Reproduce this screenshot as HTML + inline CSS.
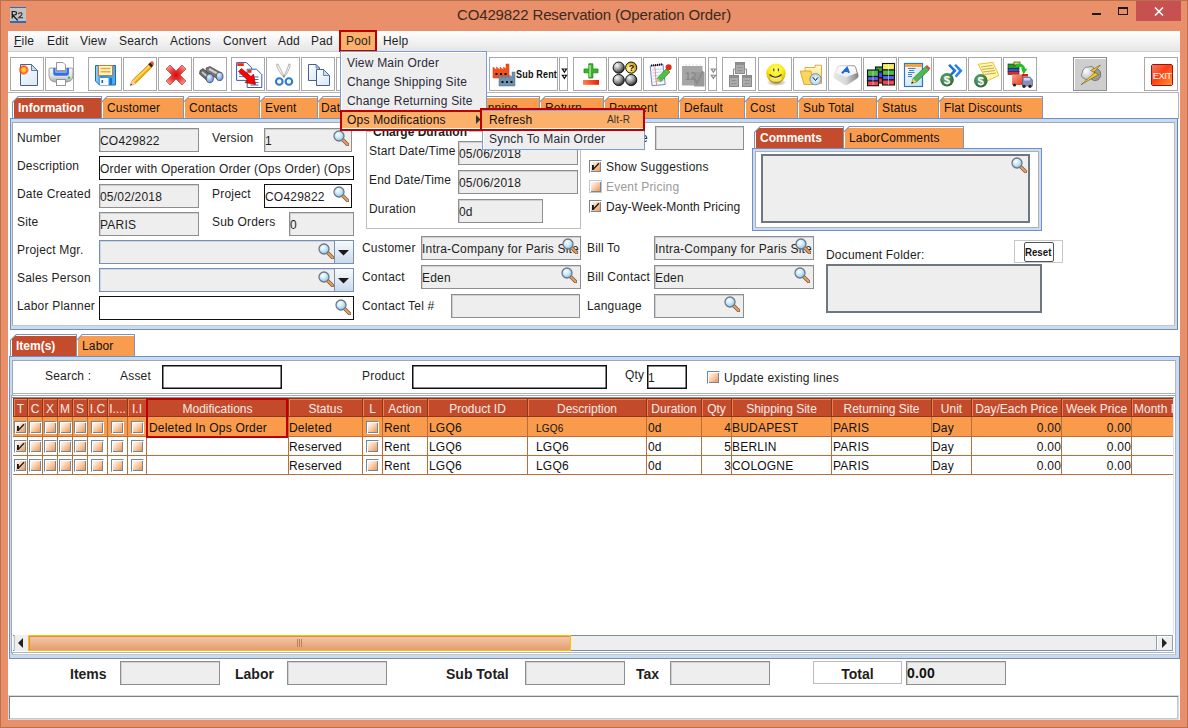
<!DOCTYPE html>
<html><head><meta charset="utf-8">
<style>
*{box-sizing:border-box;margin:0;padding:0}
html,body{width:1188px;height:728px;overflow:hidden;background:#E98F69;font-family:"Liberation Sans",sans-serif;font-size:12px;color:#222}
.a{position:absolute}
svg.a{overflow:visible}
.t{position:absolute;white-space:nowrap;line-height:14px;font-size:12px;color:#1E1E1E;letter-spacing:0.2px}
.b{font-weight:bold;letter-spacing:0}
.fld{position:absolute;background:#EEEEEE;border:1px solid #8E8E8E;box-shadow:inset 1px 1px 0 #D0D0D0;overflow:hidden;white-space:nowrap;line-height:14px;padding:5px 0 0 0;color:#1E1E1E;letter-spacing:0.2px}
.wfld{position:absolute;background:#fff;border:1px solid #111;overflow:hidden;white-space:nowrap;line-height:14px;padding:5px 0 0 0;color:#1E1E1E;letter-spacing:0.2px}
.tb{position:absolute;top:57px;height:34px;width:34px;border:1px solid #A9A9A9;background:#fff}
.tb svg{position:absolute;left:0;top:0}
.tab{position:absolute;height:22px;background:#8094B4;clip-path:polygon(6px 0,100% 0,100% 100%,0 100%,0 6px)}
.tab i{position:absolute;left:1px;top:1px;right:1px;bottom:0;background:#FA9C4E;box-shadow:inset 1px 1px 0 #fff;clip-path:polygon(5.5px 0,100% 0,100% 100%,0 100%,0 5.5px)}
.tab span{position:absolute;left:6px;top:5px;line-height:14px;white-space:nowrap;color:#111;letter-spacing:0.15px}
.tabA i{background:#C44C2D}
.tabA span{color:#fff;font-weight:bold;letter-spacing:0}
.hd{position:absolute;top:398px;height:19px;background:#C44A2C;border:1px solid #8C3A1E;border-left:none;box-shadow:inset 1px 1px 0 #F47B4A;color:#F6EDE6;text-align:center;line-height:21px;white-space:nowrap;overflow:hidden}
.cb{position:absolute;width:13px;height:13px;border-top:1px solid #72879A;border-left:1px solid #72879A;border-right:1px solid #fff;border-bottom:1px solid #fff;box-shadow:inset 1px 1px 0 #fff,inset -1px -1px 0 #72879A;background:linear-gradient(135deg,#fff 0%,#FCE0C8 35%,#F6B27E 70%,#EE8A40 100%)}
</style>
<svg width="0" height="0" style="position:absolute">
<defs>
<radialGradient id="lens" cx="0.4" cy="0.35" r="0.7"><stop offset="0" stop-color="#FFFFFF"/><stop offset="0.5" stop-color="#C6E8F8"/><stop offset="1" stop-color="#7FB8D8"/></radialGradient>
<symbol id="mag" viewBox="0 0 16 16"><path d="M9.5 9.5L14.5 14.5" stroke="#6A5A6A" stroke-width="3.6" stroke-linecap="round"/><path d="M9.5 9.5L14.5 14.5" stroke="#F4A040" stroke-width="2" stroke-linecap="round"/><circle cx="6" cy="6" r="5" fill="url(#lens)" stroke="#707888" stroke-width="1.3"/></symbol>
</defs></svg>
</head>
<body>
<div class="a" style="left:0;top:0;width:1188px;height:728px;border:1px solid #B9724F;background:#E98F69"></div>
<div class="a" style="left:10px;top:7px;width:16px;height:16px;background:#C2C2C2;border-top:1.5px solid #2A6DC0;border-bottom:2px solid #2A6DC0"></div>
<svg class="a" style="left:10px;top:7px" width="16" height="16" viewBox="0 0 16 16"><path d="M2.2 4.5V11.5M1.5 4.5H4.5Q6.5 4.5 6.5 6.3Q6.5 8 4.5 8H2.5L7.8 13.5" stroke="#1A1A1A" stroke-width="1.2" fill="none"/><path d="M8.3 6.8Q9.5 5.5 11 5.8Q12.5 6.3 11.8 7.8L8.8 10.8H13" stroke="#2A2A2A" stroke-width="1.1" fill="none"/></svg>
<div class="t" style="left:457px;top:6px;font-size:15px;line-height:18px;color:#3A2A20;letter-spacing:-0.14px" id="title">CO429822 Reservation (Operation Order)</div>
<div class="a" style="left:1092px;top:13px;width:9px;height:2px;background:#1A1A1A"></div>
<div class="a" style="left:1118px;top:7px;width:10px;height:8px;border:1px solid #1A1A1A;border-top-width:2px"></div>
<div class="a" style="left:1136px;top:1px;width:45px;height:20px;background:#C75050"></div>
<svg class="a" style="left:1154px;top:7px" width="10" height="9" viewBox="0 0 10 9"><path d="M1 0.5L9 8.5M9 0.5L1 8.5" stroke="#fff" stroke-width="1.6"/></svg>
<div class="a" style="left:8px;top:31px;width:1172px;height:689px;background:#fff"></div>
<div class="a" style="left:8px;top:31px;width:1172px;height:21px;background:linear-gradient(#FFFFFF,#E6E6E6);border-bottom:1px solid #CFCFCF"></div>
<div class="t" style="left:14px;top:34px"><u>F</u>ile</div>
<div class="t" style="left:47px;top:34px">Edit</div>
<div class="t" style="left:80px;top:34px">View</div>
<div class="t" style="left:119px;top:34px">Search</div>
<div class="t" style="left:170px;top:34px">Actions</div>
<div class="t" style="left:223px;top:34px">Convert</div>
<div class="t" style="left:278px;top:34px">Add</div>
<div class="t" style="left:311px;top:34px">Pad</div>
<div class="a" style="left:339px;top:30px;width:38px;height:22px;background:#FBB06C;border:2px solid #C00000"></div>
<div class="t" style="left:346px;top:34px">Pool</div>
<div class="t" style="left:383px;top:34px">Help</div>
<div class="a" style="left:8px;top:92px;width:1170px;height:1px;background:#B4B4B4"></div>
<!-- 1 new -->
<div class="tb" style="left:10px"><svg width="34" height="34" viewBox="0 0 34 34">
<defs><linearGradient id="pg" x1="0" y1="0" x2="0.6" y2="1"><stop offset="0" stop-color="#fff"/><stop offset="1" stop-color="#DCEBF8"/></linearGradient>
<radialGradient id="star" cx="0.5" cy="0.5" r="0.5"><stop offset="0" stop-color="#FFE020"/><stop offset="0.45" stop-color="#FFB020"/><stop offset="0.6" stop-color="#F04A20"/><stop offset="1" stop-color="#F86040" stop-opacity="0"/></radialGradient></defs>
<path d="M9.5 6.5H20.5L26.5 12.5V27.5H9.5Z" fill="url(#pg)" stroke="#48608E" stroke-width="1"/>
<path d="M20.5 6.5L26.5 12.5H20.5Z" fill="#BFE0F4" stroke="#48608E" stroke-width="0.8"/>
<circle cx="12.7" cy="11.9" r="5.6" fill="url(#star)"/>
</svg></div>
<!-- 2 print -->
<div class="tb" style="left:45px;width:29px"><svg width="29" height="34" viewBox="0 0 29 34">
<defs><linearGradient id="prb" x1="0" y1="0" x2="0" y2="1"><stop offset="0" stop-color="#F8F8F8"/><stop offset="0.6" stop-color="#E0E0E0"/><stop offset="1" stop-color="#A8A8A8"/></linearGradient></defs>
<path d="M3 11Q3 10 4 10H26Q27 10 27 11V17Q27 24 20 24H10Q3 24 3 17Z" fill="url(#prb)" stroke="#8A8A8A" stroke-width="0.8"/>
<path d="M7.3 10H22.9V15.5Q22.9 17.8 20.5 17.8H9.7Q7.3 17.8 7.3 15.5Z" fill="#2E6EE8"/>
<path d="M9 10H21V14Q21 15 20 15H10Q9 15 9 14Z" fill="#7AAAF4"/>
<path d="M10.5 4.5H17L19.5 7V12.5H10.5Z" fill="#fff" stroke="#8A8A8A" stroke-width="0.9"/>
<rect x="10" y="12" width="10" height="2" fill="#9A9AA8"/>
<rect x="10.5" y="21.5" width="9" height="6" fill="#fff" stroke="#8A8A8A" stroke-width="0.9"/>
<circle cx="23" cy="19.7" r="1.1" fill="#28B028"/>
</svg></div>
<!-- 3 save -->
<div class="tb" style="left:88px"><svg width="34" height="34" viewBox="0 0 34 34">
<defs><linearGradient id="flp" x1="0" y1="0" x2="1" y2="0"><stop offset="0" stop-color="#A8D8F8"/><stop offset="0.3" stop-color="#2A8AE0"/><stop offset="1" stop-color="#50B0F0"/></linearGradient></defs>
<path d="M6.5 7.5H26.5V27H10.5L6.5 23Z" fill="url(#flp)" stroke="#1A6AC0" stroke-width="1"/>
<rect x="9.5" y="7.5" width="14" height="10" fill="#FFF6D0" stroke="#C88030" stroke-width="1"/>
<path d="M11.5 10.5H21.5M11.5 13.8H21.5" stroke="#F8A830" stroke-width="1.5"/>
<rect x="11" y="20" width="8.5" height="7" fill="#F8FBFE"/><rect x="12.5" y="22" width="1.6" height="3" fill="#1A5FC8"/>
<rect x="20.5" y="20" width="2.5" height="7" fill="#1E70D0"/>
</svg></div>
<!-- 4 pencil -->
<div class="tb" style="left:123px"><svg width="34" height="34" viewBox="0 0 34 34">
<defs><linearGradient id="shd" x1="0" y1="0" x2="1" y2="1"><stop offset="0" stop-color="#fff" stop-opacity="0"/><stop offset="1" stop-color="#888" stop-opacity="0.45"/></linearGradient></defs>
<path d="M7 26L14 12L18 16Z" fill="url(#shd)"/>
<path d="M6.2 27.6L8.2 22.4L24.6 6.6L27.6 9.6L11.4 25.6Z" fill="#F8A800" stroke="#C07800" stroke-width="0.6"/>
<path d="M8.4 23.2L25 7.2L26.2 8.4L9.8 24.6Z" fill="#FFD860"/>
<path d="M6.2 27.6L8.2 22.4L11.4 25.6Z" fill="#F6D2B8"/>
<path d="M6.2 27.6L7 25.6L8.2 26.8Z" fill="#333"/>
<path d="M24.2 6.2L26.4 4.2L29.4 7.2L27.6 9.6Z" fill="#222"/>
<path d="M26 4.6L27.6 3.2Q29 3 29.6 4.4L30 6.2L28.8 7.6Z" fill="#F05028"/>
</svg></div>
<!-- 5 X -->
<div class="tb" style="left:158px"><svg width="34" height="34" viewBox="0 0 34 34">
<defs><radialGradient id="xg" cx="0.5" cy="0.5" r="0.6"><stop offset="0" stop-color="#D80808"/><stop offset="0.5" stop-color="#E84040"/><stop offset="1" stop-color="#F8A0A0"/></radialGradient></defs>
<path d="M7 11L11 7L17 13L23 7L27 11L21 17L27 23L23 27L17 21L11 27L7 23L13 17Z" fill="url(#xg)" stroke="#C03030" stroke-width="0.7" stroke-linejoin="round"/>
</svg></div>
<!-- 6 binoculars -->
<div class="tb" style="left:193px"><svg width="34" height="34" viewBox="0 0 34 34">
<defs><linearGradient id="bar" x1="0" y1="0" x2="0" y2="1"><stop offset="0" stop-color="#505050"/><stop offset="0.5" stop-color="#B8B8B8"/><stop offset="1" stop-color="#404040"/></linearGradient>
<radialGradient id="bl" cx="0.4" cy="0.35" r="0.6"><stop offset="0" stop-color="#E8F4FF"/><stop offset="1" stop-color="#6A9AE0"/></radialGradient></defs>
<path d="M6 12.5L9 10.5L18 18L14 23.5L5.5 16Z" fill="#6A6A6A" stroke="#333" stroke-width="0.6"/>
<path d="M8 14L15.5 20.5" stroke="#C8C8C8" stroke-width="2"/>
<path d="M12 10L16 8.5L27.5 15L23.5 21L12.5 14Z" fill="#777" stroke="#333" stroke-width="0.6"/>
<path d="M15 11L25 16.5" stroke="#D0D0D0" stroke-width="2"/>
<ellipse cx="15.8" cy="20.3" rx="3.6" ry="4.4" fill="url(#bl)" stroke="#444" stroke-width="0.8"/>
<ellipse cx="25.6" cy="18.4" rx="3.4" ry="4.2" fill="url(#bl)" stroke="#444" stroke-width="0.8"/>
</svg></div>
<!-- 7 copy-to -->
<div class="tb" style="left:231px"><svg width="34" height="34" viewBox="0 0 34 34">
<path d="M4.6 4.6H14.5L19.7 9.8V22.4H4.6Z" fill="#fff" stroke="#3A5AA8" stroke-width="1"/>
<rect x="5.3" y="5.2" width="6.5" height="2.8" fill="#F82808"/>
<path d="M7 16H15M7 18.5H15" stroke="#3A5AA8" stroke-width="0.8"/>
<path d="M15.2 11.2H24.5L29.8 16.5V29.5H15.2Z" fill="#fff" stroke="#3A5AA8" stroke-width="1"/>
<rect x="16" y="12" width="3.5" height="2.8" fill="#F82808"/>
<path d="M18.5 19H26.5M18.5 21.5H26.5M18.5 24.5H26.5M18.5 27H26.5" stroke="#3A5AA8" stroke-width="0.9"/>
<path d="M6.5 13.5L9.5 10.5L19 18.5L21.5 16L23.5 26.5L13 24.5L15.5 22Z" fill="#FF0000" stroke="#700" stroke-width="0.6"/>
</svg></div>
<!-- 8 scissors -->
<div class="tb" style="left:266px"><svg width="34" height="34" viewBox="0 0 34 34">
<path d="M9.7 6.1Q9 9 15 17.5L17.5 19Q13 10 11 6Z" fill="#F4F4F4" stroke="#9A9A9A" stroke-width="0.7"/>
<path d="M23 6.1Q24 9 18.5 17.5L16.5 19Q21 10 21.8 6Z" fill="#F4F4F4" stroke="#9A9A9A" stroke-width="0.7"/>
<circle cx="17" cy="18.5" r="0.9" fill="#888"/>
<circle cx="12.3" cy="23.5" r="3.3" fill="none" stroke="#2A78D8" stroke-width="2.1"/>
<circle cx="21.9" cy="23.5" r="3.3" fill="none" stroke="#2A78D8" stroke-width="2.1"/>
</svg></div>
<!-- 9 copy -->
<div class="tb" style="left:301px"><svg width="34" height="34" viewBox="0 0 34 34">
<path d="M6.5 6.5H14L17.5 10V22.5H6.5Z" fill="url(#pg)" stroke="#48608E" stroke-width="1"/>
<path d="M14 6.5L17.5 10H14Z" fill="#BFE0F4" stroke="#48608E" stroke-width="0.7"/>
<path d="M14.5 11.5H21.5L27.5 17.5V27.5H14.5Z" fill="url(#pg)" stroke="#48608E" stroke-width="1"/>
<path d="M21.5 11.5L27.5 17.5H21.5Z" fill="#BFE0F4" stroke="#48608E" stroke-width="0.7"/>
</svg></div>
<div class="tb" style="left:336px"></div>
<!-- 11 sub rent -->
<div class="tb" style="left:489px;width:69px"><svg width="69" height="34" viewBox="0 0 69 34">
<path d="M3 20V9L6.5 12V9L10 12V9L13.5 12V9L16 11V6H19V20Z" fill="#F4501A" stroke="#D03810" stroke-width="0.5"/>
<rect x="5.5" y="15" width="2" height="2" fill="#111"/><rect x="10" y="15" width="2" height="2" fill="#111"/><rect x="14.5" y="15" width="2" height="2" fill="#111"/>
<path d="M9 28V17L12.5 20V17L16 20V17L19.5 20V17L22 19V14H25V28Z" fill="#6F92AE" stroke="#50708C" stroke-width="0.5"/>
<rect x="11.5" y="23" width="2" height="2" fill="#111"/><rect x="16" y="23" width="2" height="2" fill="#111"/><rect x="20.5" y="23" width="2" height="2" fill="#111"/>
</svg><div class="t b" style="left:25.5px;top:9px;font-size:10.5px;color:#111;letter-spacing:0.2px;transform:scaleX(0.86);transform-origin:0 0">Sub Rent</div></div>
<div class="tb" style="left:559px;width:9px"><svg width="9" height="34" viewBox="0 0 9 34"><path d="M1.2 10.5H7.6L4.4 15.3Z M1.2 16.8H7.6L4.4 21.6Z" fill="#111"/><circle cx="4.4" cy="12" r="0.8" fill="#fff"/><circle cx="4.4" cy="18.3" r="0.8" fill="#fff"/></svg></div>
<!-- 13 +/- -->
<div class="tb" style="left:573px"><svg width="34" height="34" viewBox="0 0 34 34">
<defs><linearGradient id="mn" x1="0" y1="0" x2="1" y2="0"><stop offset="0" stop-color="#FF8050"/><stop offset="1" stop-color="#E82000"/></linearGradient></defs>
<path d="M14.8 5.8H18.9V11H24V14.8H18.9V20H14.8V14.8H10V11H14.8Z" fill="#3CB030" stroke="#1A8A10" stroke-width="0.8"/>
<path d="M16 7V19" stroke="#C8F0B0" stroke-width="1.2"/>
<rect x="9" y="22" width="16" height="4.8" fill="url(#mn)"/>
</svg></div>
<!-- 14 balls -->
<div class="tb" style="left:608px"><svg width="34" height="34" viewBox="0 0 34 34">
<defs><radialGradient id="gb" cx="0.35" cy="0.3" r="0.7"><stop offset="0" stop-color="#FAFAFA"/><stop offset="0.55" stop-color="#9A9A9A"/><stop offset="1" stop-color="#303030"/></radialGradient>
<radialGradient id="yb" cx="0.35" cy="0.6" r="0.7"><stop offset="0" stop-color="#FFFFE0"/><stop offset="0.5" stop-color="#F8D040"/><stop offset="1" stop-color="#B08010"/></radialGradient></defs>
<circle cx="9.7" cy="9.6" r="5.6" fill="url(#gb)" stroke="#111" stroke-width="1"/>
<circle cx="22.2" cy="9.6" r="5.6" fill="url(#yb)" stroke="#111" stroke-width="1"/>
<circle cx="9.7" cy="22" r="5.6" fill="url(#gb)" stroke="#111" stroke-width="1"/>
<circle cx="22.2" cy="22" r="5.6" fill="url(#gb)" stroke="#111" stroke-width="1"/>
<text x="22.4" y="13" font-size="9" font-weight="bold" text-anchor="middle" fill="#111" font-family="Liberation Sans">?</text>
</svg></div>
<!-- 15 notepad -->
<div class="tb" style="left:643px"><svg width="34" height="34" viewBox="0 0 34 34">
<path d="M6.2 8L19 6.5L21.2 26.5L8 27.7Z" fill="#F8FAFF" stroke="#6A70C8" stroke-width="0.9"/>
<path d="M8 12L19.5 10.7M8.3 15L19.8 13.7M8.6 18L20.1 16.7M8.9 21L20.4 19.7M9.2 24L20.7 22.7" stroke="#A8C8F0" stroke-width="0.7"/>
<path d="M10.8 8.5L12.6 27" stroke="#F07050" stroke-width="0.8"/>
<path d="M7 7.6L19 6.2" stroke="#111" stroke-width="2" stroke-dasharray="1.2 0.8"/>
<path d="M13.5 20L22.5 10.5L26 14L17 23.5L14 22.5Z" fill="#50C040" stroke="#208018" stroke-width="0.6"/>
<path d="M13.5 20L17 23.5L13.6 22.4Z" fill="#E8C8A0"/><path d="M13.4 21.4L14 22.5L13.6 22.4Z" fill="#333"/>
<circle cx="24.6" cy="9.2" r="3" fill="#E02818"/>
</svg></div>
<!-- 16 calendar grey -->
<div class="tb" style="left:678px;width:28px"><svg width="28" height="34" viewBox="0 0 28 34">
<rect x="3" y="8" width="20.5" height="19.5" fill="#A6A6A6"/>
<rect x="15" y="14" width="10.5" height="14.5" fill="#9A9A9A"/>
<path d="M6 6.5Q7 5.5 7.5 8M9.5 6.5Q10.5 5.5 11 8M13 6.5Q14 5.5 14.5 8M16.5 6.5Q17.5 5.5 18 8M20 6.5Q21 5.5 21.5 8" stroke="#E8E8E8" stroke-width="1.2" fill="none"/>
<text x="6" y="22" font-size="10" font-weight="bold" fill="#8A8A8A" font-family="Liberation Sans">12</text>
<path d="M14.5 19L18 25L24 13" stroke="#8A8A8A" stroke-width="1.6" fill="none"/>
</svg></div>
<div class="tb" style="left:708px;width:9px"><svg width="9" height="34" viewBox="0 0 9 34"><path d="M1.2 10.5H7.6L4.4 15.3Z M1.2 16.8H7.6L4.4 21.6Z" fill="#8A8A8A"/><circle cx="4.4" cy="12" r="0.8" fill="#fff"/><circle cx="4.4" cy="18.3" r="0.8" fill="#fff"/></svg></div>
<!-- 18 hierarchy -->
<div class="tb" style="left:722px"><svg width="34" height="34" viewBox="0 0 34 34">
<path d="M10.5 17V11H23.5V17" stroke="#8A8A8A" stroke-width="1" fill="none"/>
<rect x="12.5" y="4.5" width="9" height="11" fill="#ABABAB" stroke="#8A8A8A"/><rect x="13" y="5" width="8" height="2" fill="#8E8E8E"/>
<rect x="6.5" y="17.5" width="9" height="11" fill="#ABABAB" stroke="#8A8A8A"/><rect x="7" y="18" width="8" height="2" fill="#8E8E8E"/>
<rect x="19.5" y="17.5" width="9" height="11" fill="#ABABAB" stroke="#8A8A8A"/><rect x="20" y="18" width="8" height="2" fill="#8E8E8E"/>
<path d="M14.5 9.5H19.5M14.5 12.5H19.5M8.5 22.5H13.5M8.5 25.5H13.5M21.5 22.5H26.5M21.5 25.5H26.5" stroke="#8A8A8A" stroke-width="0.8"/>
</svg></div>
<!-- 19 smiley -->
<div class="tb" style="left:758px"><svg width="34" height="34" viewBox="0 0 34 34">
<defs><radialGradient id="sm" cx="0.5" cy="0.3" r="0.7"><stop offset="0" stop-color="#FFFF60"/><stop offset="0.55" stop-color="#F8E820"/><stop offset="0.85" stop-color="#E0C000"/><stop offset="1" stop-color="#8A7000"/></radialGradient>
<radialGradient id="ssh" cx="0.5" cy="0.5" r="0.5"><stop offset="0" stop-color="#605000" stop-opacity="0.7"/><stop offset="1" stop-color="#605000" stop-opacity="0"/></radialGradient></defs>
<ellipse cx="17.5" cy="24.5" rx="10" ry="3.5" fill="url(#ssh)"/>
<circle cx="17" cy="15.3" r="9.7" fill="url(#sm)"/>
<ellipse cx="17" cy="21" rx="6" ry="3" fill="#FFFFB0" opacity="0.5"/>
<path d="M14.8 10.5V13.3M19.4 10.5V13.3" stroke="#333" stroke-width="1.1"/>
<path d="M10.5 16.5Q16.5 22 22.5 16.5" stroke="#222" stroke-width="1.1" fill="none"/>
</svg></div>
<!-- 20 folder clock -->
<div class="tb" style="left:793px"><svg width="34" height="34" viewBox="0 0 34 34">
<defs><linearGradient id="fy" x1="0" y1="0" x2="0" y2="1"><stop offset="0" stop-color="#FFFCE0"/><stop offset="1" stop-color="#F8D040"/></linearGradient>
<radialGradient id="ck" cx="0.5" cy="0.5" r="0.5"><stop offset="0" stop-color="#F0FAFF"/><stop offset="1" stop-color="#A8D8F0"/></radialGradient></defs>
<path d="M11 9.5H21V7.2H27.5V25.5H11Z" fill="url(#fy)" stroke="#D89820" stroke-width="0.8"/>
<path d="M6.2 13H17L19 26.5H10Z" fill="#FAD860" stroke="#D89820" stroke-width="0.8"/>
<circle cx="21.5" cy="21.2" r="5.6" fill="url(#ck)" stroke="#8A8A9A" stroke-width="1"/>
<path d="M18.8 19.2L21.5 22.5L23.8 19.5" stroke="#111" stroke-width="1" fill="none"/>
</svg></div>
<!-- 21 key -->
<div class="tb" style="left:828px"><svg width="34" height="34" viewBox="0 0 34 34">
<defs><linearGradient id="ky" x1="0" y1="0" x2="1" y2="0"><stop offset="0" stop-color="#E8E8E8"/><stop offset="0.5" stop-color="#D8D8D8"/><stop offset="1" stop-color="#7E7E7E"/></linearGradient>
<linearGradient id="kt" x1="0" y1="0" x2="0" y2="1"><stop offset="0" stop-color="#FFFFFF"/><stop offset="1" stop-color="#EDEDED"/></linearGradient></defs>
<path d="M8 9Q9 7 11 7L24 7Q26 7 27 9L29.5 17Q30 19 28 20.5L19 26.5Q17 27.5 15 26.5L5.5 20.5Q4 19 4.8 17Z" fill="url(#ky)"/>
<path d="M10 8.5L24.5 8.2Q25.8 8.2 26.2 9.5L27.8 15L17 19.2L6.8 15Z" fill="url(#kt)"/>
<path d="M13 15.2L18 10L20 14.8M14.8 13.3L19.5 12.6" stroke="#1A6AE8" stroke-width="2.1" fill="none"/>
</svg></div>
<!-- 22 blocks -->
<div class="tb" style="left:863px"><svg width="34" height="34" viewBox="0 0 34 34">
<g stroke="#111" stroke-width="1.1">
<rect x="11.5" y="9" width="8" height="5" fill="#30A830"/><rect x="11.5" y="14" width="8" height="6" fill="#4050F0"/><rect x="11.5" y="20" width="8" height="5" fill="#E83838"/>
<rect x="3.5" y="12" width="11" height="6.5" fill="#50B850"/><rect x="3.5" y="18.5" width="11" height="4.5" fill="#5060F0"/><rect x="3.5" y="23" width="11" height="4.7" fill="#F04848"/>
<rect x="18.5" y="5.5" width="12" height="6.5" fill="#F0F060"/><rect x="18.5" y="12" width="12" height="5.5" fill="#50B850"/><rect x="18.5" y="17.5" width="12" height="4.5" fill="#5060F0"/><rect x="18.5" y="22" width="12" height="5" fill="#F04848"/>
</g>
<path d="M9 13V27M24.5 6V27" stroke="#fff" stroke-width="0.8" opacity="0.6"/>
</svg></div>
<!-- 23 edit doc -->
<div class="tb" style="left:898px"><svg width="34" height="34" viewBox="0 0 34 34">
<defs><linearGradient id="ed" x1="0" y1="0" x2="1" y2="1"><stop offset="0" stop-color="#FFFFFF"/><stop offset="1" stop-color="#C8DDF4"/></linearGradient></defs>
<rect x="5.5" y="5.5" width="18" height="23" fill="url(#ed)" stroke="#2A78C8" stroke-width="1.2"/>
<rect x="6.1" y="6.1" width="16.8" height="2.8" fill="#F8A030"/>
<path d="M9 10.5H16.5M10 12.5H15M9 14.5H15.5M9 16.5H13M9 18.5H13" stroke="#2A78C8" stroke-width="0.9"/>
<path d="M12.5 25.5L14 20.5L26.5 8.5L30 12L17.5 24Z" fill="#50B850" stroke="#1E7A1E" stroke-width="0.6"/>
<path d="M26.5 8.5L28 7L31.5 10.5L30 12Z" fill="#E84028"/>
<path d="M12.5 25.5L14 20.5L17.5 24Z" fill="#F0C870"/><path d="M12.5 25.5L13.2 23.5L14.5 24.8Z" fill="#111"/>
</svg></div>
<!-- 24 $ arrows -->
<div class="tb" style="left:933px"><svg width="34" height="34" viewBox="0 0 34 34">
<defs><radialGradient id="coin" cx="0.4" cy="0.35" r="0.65"><stop offset="0" stop-color="#6AA870"/><stop offset="1" stop-color="#2A6A38"/></radialGradient></defs>
<path d="M14.1 7.5L16 5.9L22.6 12.7L16.5 19L14.6 17.4L19 12.7Z" fill="#1A70E0"/>
<path d="M20.1 7.5L22 5.9L28.6 12.7L22.5 19.5L20.6 17.9L25 12.7Z" fill="#2A80F0"/>
<circle cx="13" cy="21.8" r="6.8" fill="url(#coin)"/>
<text x="13" y="26" font-size="11.5" font-weight="bold" text-anchor="middle" fill="#fff" font-family="Liberation Sans">$</text>
</svg></div>
<!-- 25 $ note -->
<div class="tb" style="left:968px"><svg width="34" height="34" viewBox="0 0 34 34">
<path d="M9.2 6.2L23.9 4.4L29.8 17.4L18 23Z" fill="#FFF8B0" stroke="#F0B810" stroke-width="0.9"/>
<path d="M12 9L23.5 7.5M13 11.5L25 10M14 14L26 12.5M15.5 16.5L27 15" stroke="#C8A850" stroke-width="1"/>
<circle cx="11.8" cy="22.7" r="6.8" fill="url(#coin)"/>
<text x="11.8" y="26.9" font-size="11.5" font-weight="bold" text-anchor="middle" fill="#fff" font-family="Liberation Sans">$</text>
</svg></div>
<!-- 26 truck -->
<div class="tb" style="left:1003px"><svg width="34" height="34" viewBox="0 0 34 34">
<defs><linearGradient id="trk" x1="0" y1="0" x2="1" y2="1"><stop offset="0" stop-color="#F8A088"/><stop offset="1" stop-color="#E83820"/></linearGradient></defs>
<g stroke="#222" stroke-width="0.6"><rect x="4" y="6" width="11" height="4.5" fill="#20A020"/><rect x="4" y="10.5" width="11" height="3" fill="#3050E0"/><rect x="4" y="13.5" width="11" height="3" fill="#E02828"/><rect x="10" y="4" width="6" height="3" fill="#E8E060"/></g>
<path d="M12 6Q19 4 21.5 11L23.5 10.5L19.5 16.5L17 10L19 10.5Q17 8 12 9Z" fill="#20C020"/>
<rect x="8" y="16.5" width="11.5" height="10.5" fill="url(#trk)"/>
<rect x="18" y="16" width="6" height="2.5" fill="#E81808"/>
<path d="M18.5 19H26L28.5 22V28H18.5Z" fill="#8A90B8" stroke="#50587A" stroke-width="0.6"/>
<rect x="20" y="20" width="6" height="2.5" fill="#C8D8F8"/>
<circle cx="10.5" cy="27" r="1.6" fill="#222"/><circle cx="20" cy="28.3" r="1.6" fill="#222"/><circle cx="26" cy="28.3" r="1.6" fill="#222"/>
</svg></div>
<!-- 27 lightning -->
<div class="tb" style="left:1073px;background:#CECECE;border-color:#8E8E8E;box-shadow:inset 1px 1px 0 #fff"><svg width="34" height="34" viewBox="0 0 34 34">
<defs><radialGradient id="cl" cx="0.35" cy="0.35" r="0.7"><stop offset="0" stop-color="#FFFFFF"/><stop offset="1" stop-color="#B8B8B8"/></radialGradient></defs>
<path d="M18 11Q24 9 26.5 14Q28 19 24 22Q20 24 17 21Z" fill="#9A9A9A" stroke="#555" stroke-width="0.6"/>
<path d="M9 12Q11 8 15 9Q19 7 20 11Q22 16 18 19Q16 23 11 21Q6 19 8 15Z" fill="url(#cl)" stroke="#555" stroke-width="0.6"/>
<path d="M26.5 7L16.5 12.5L21 14.5L7 26.8L24.5 16.5L20 14Z" fill="#F8C820" stroke="#5A4A10" stroke-width="0.5"/>
</svg></div>
<!-- 28 exit -->
<div class="tb" style="left:1144px"><svg width="34" height="34" viewBox="0 0 34 34">
<defs><linearGradient id="eg" x1="0" y1="0" x2="1" y2="1"><stop offset="0" stop-color="#E88070"/><stop offset="0.45" stop-color="#FF4010"/><stop offset="1" stop-color="#FF9838"/></linearGradient></defs>
<path d="M7.5 6.5H26.5L27.5 7.5V26.5L26.5 27.5H7.5L6.5 26.5V7.5Z" fill="url(#eg)" stroke="#A01010" stroke-width="1"/>
<text x="17.2" y="20.8" font-size="9.5" text-anchor="middle" fill="#fff" font-family="Liberation Sans" letter-spacing="-0.6">EXIT</text>
</svg></div>
<div class="tab tabA" style="left:12px;top:96px;width:90px"><i></i><span>Information</span></div>
<div class="tab" style="left:101px;top:96px;width:83px"><i></i><span>Customer</span></div>
<div class="tab" style="left:183px;top:96px;width:77px"><i></i><span>Contacts</span></div>
<div class="tab" style="left:259px;top:96px;width:59px"><i></i><span>Event</span></div>
<div class="tab" style="left:317px;top:96px;width:100px"><i></i><span style="left:4px">Date</span></div>
<div class="tab" style="left:416px;top:96px;width:124px"><i></i><span style="left:54px">Planning</span></div>
<div class="tab" style="left:539px;top:96px;width:65px"><i></i><span>Return</span></div>
<div class="tab" style="left:603px;top:96px;width:76px"><i></i><span>Payment</span></div>
<div class="tab" style="left:678px;top:96px;width:67px"><i></i><span>Default</span></div>
<div class="tab" style="left:744px;top:96px;width:54px"><i></i><span>Cost</span></div>
<div class="tab" style="left:797px;top:96px;width:80px"><i></i><span>Sub Total</span></div>
<div class="tab" style="left:876px;top:96px;width:63px"><i></i><span>Status</span></div>
<div class="tab" style="left:938px;top:96px;width:105px"><i></i><span>Flat Discounts</span></div>
<div class="a" style="left:1178px;top:92px;width:1px;height:27px;background:#B4B4B4"></div>
<!-- panel frame -->
<div class="a" style="left:10px;top:118px;width:1168px;height:212px;background:#C8DBF1;border:1px solid #6C8FD0;border-right-color:#6E7F96;border-bottom-color:#7C90AC"></div>
<div class="a" style="left:12px;top:122px;width:1163px;height:204px;background:#fff;border:1px solid #A6A6A6;border-right-color:#B8B8B8;border-bottom-color:#C8C8C8"></div>
<!-- col1 labels -->
<div class="t" style="left:17px;top:131px">Number</div>
<div class="t" style="left:17px;top:159px">Description</div>
<div class="t" style="left:17px;top:187px">Date Created</div>
<div class="t" style="left:17px;top:215px">Site</div>
<div class="t" style="left:17px;top:243px">Project Mgr.</div>
<div class="t" style="left:17px;top:271px">Sales Person</div>
<div class="t" style="left:17px;top:299px">Labor Planner</div>
<div class="t" style="left:212px;top:131px">Version</div>
<div class="t" style="left:212px;top:187px">Project</div>
<div class="t" style="left:212px;top:215px">Sub Orders</div>
<!-- col1 fields -->
<div class="fld" style="left:99px;top:128px;width:100px;height:24px">CO429822</div>
<div class="fld" style="left:264px;top:128px;width:88px;height:24px">1</div>
<svg class="a" style="left:333px;top:130px" width="16" height="16"><use href="#mag"/></svg>
<div class="wfld" style="left:99px;top:156px;width:255px;height:24px">Order with Operation Order (Ops Order) (Ops Order)</div>
<div class="fld" style="left:99px;top:184px;width:100px;height:24px">05/02/2018</div>
<div class="wfld" style="left:264px;top:184px;width:88px;height:24px">CO429822</div>
<svg class="a" style="left:333px;top:186px" width="16" height="16"><use href="#mag"/></svg>
<div class="fld" style="left:99px;top:212px;width:100px;height:24px">PARIS</div>
<div class="fld" style="left:289px;top:212px;width:65px;height:24px">0</div>
<!-- combos -->
<div class="a" style="left:99px;top:240px;width:255px;height:24px;background:#EEEEEE;border:1px solid #7C8FA8;box-shadow:inset 1px 1px 0 #C8D8EC"></div>
<div class="a" style="left:334px;top:240px;width:20px;height:24px;background:linear-gradient(#F8FAFC,#C8DAEC);border:1px solid #7C8FA8"></div>
<svg class="a" style="left:338px;top:250px" width="11" height="6"><path d="M0 0H11L5.5 5.5Z" fill="#1A1A1A"/></svg>
<svg class="a" style="left:318px;top:243px" width="16" height="16"><use href="#mag"/></svg>
<div class="a" style="left:99px;top:268px;width:255px;height:24px;background:#EEEEEE;border:1px solid #7C8FA8;box-shadow:inset 1px 1px 0 #C8D8EC"></div>
<div class="a" style="left:334px;top:268px;width:20px;height:24px;background:linear-gradient(#F8FAFC,#C8DAEC);border:1px solid #7C8FA8"></div>
<svg class="a" style="left:338px;top:278px" width="11" height="6"><path d="M0 0H11L5.5 5.5Z" fill="#1A1A1A"/></svg>
<svg class="a" style="left:318px;top:271px" width="16" height="16"><use href="#mag"/></svg>
<div class="wfld" style="left:99px;top:296px;width:255px;height:24px"></div>
<svg class="a" style="left:335px;top:299px" width="16" height="16"><use href="#mag"/></svg>

<!-- charge duration -->
<div class="a" style="left:366px;top:131px;width:215px;height:98px;border:1px solid #BEBEBE"></div>
<div class="t b" style="left:371px;top:125px;background:#fff;padding:0 2px">Charge Duration</div>
<div class="t" style="left:369px;top:144px">Start Date/Time</div>
<div class="t" style="left:369px;top:173px">End Date/Time</div>
<div class="t" style="left:369px;top:202px">Duration</div>
<div class="fld" style="left:458px;top:141px;width:120px;height:24px">05/06/2018</div>
<div class="fld" style="left:458px;top:170px;width:120px;height:24px">05/06/2018</div>
<div class="fld" style="left:458px;top:199px;width:85px;height:24px">0d</div>

<div class="t" style="left:362px;top:241px">Customer</div>
<div class="t" style="left:362px;top:270px">Contact</div>
<div class="t" style="left:362px;top:299px">Contact Tel #</div>
<div class="fld" style="left:421px;top:236px;width:160px;height:24px">Intra-Company for Paris Site</div>
<svg class="a" style="left:562px;top:238px" width="16" height="16"><use href="#mag"/></svg>
<div class="fld" style="left:421px;top:265px;width:160px;height:24px">Eden</div>
<svg class="a" style="left:561px;top:267px" width="16" height="16"><use href="#mag"/></svg>
<div class="fld" style="left:451px;top:294px;width:129px;height:24px"></div>

<!-- col3 -->
<div class="t" style="left:621px;top:131px">Type</div>
<div class="fld" style="left:655px;top:126px;width:89px;height:24px"></div>
<div class="cb" style="left:589px;top:160px"></div>
<svg class="a" style="left:589px;top:160px" width="13" height="13"><path d="M3 5H4.9V9.9H3Z" fill="#1A1A1A"/><path d="M4.3 9.2L10 3.3" stroke="#1A1A1A" stroke-width="1.3"/></svg>
<div class="t" style="left:606px;top:160px">Show Suggestions</div>
<div class="cb" style="left:589px;top:180px;border-color:#B8C8D8"></div>
<div class="t" style="left:606px;top:180px;color:#9A9A9A">Event Pricing</div>
<div class="cb" style="left:589px;top:200px"></div>
<svg class="a" style="left:589px;top:200px" width="13" height="13"><path d="M3 5H4.9V9.9H3Z" fill="#1A1A1A"/><path d="M4.3 9.2L10 3.3" stroke="#1A1A1A" stroke-width="1.3"/></svg>
<div class="t" style="left:606px;top:200px;letter-spacing:0.05px">Day-Week-Month Pricing</div>

<div class="t" style="left:587px;top:241px">Bill To</div>
<div class="t" style="left:587px;top:270px">Bill Contact</div>
<div class="t" style="left:587px;top:299px">Language</div>
<div class="fld" style="left:654px;top:236px;width:160px;height:24px">Intra-Company for Paris Site</div>
<svg class="a" style="left:795px;top:238px" width="16" height="16"><use href="#mag"/></svg>
<div class="fld" style="left:654px;top:265px;width:160px;height:24px">Eden</div>
<svg class="a" style="left:794px;top:267px" width="16" height="16"><use href="#mag"/></svg>
<div class="fld" style="left:654px;top:294px;width:90px;height:24px"></div>
<svg class="a" style="left:724px;top:296px" width="16" height="16"><use href="#mag"/></svg>

<!-- comments -->
<div class="tab tabA" style="left:754px;top:126px;width:90px"><i></i><span>Comments</span></div>
<div class="tab" style="left:843px;top:126px;width:121px"><i></i><span>LaborComments</span></div>
<div class="a" style="left:752px;top:148px;width:290px;height:83px;background:#C8DBF1;border:1px solid #6C8FD0"></div>
<div class="a" style="left:755px;top:151px;width:284px;height:77px;background:#fff;border:1px solid #B0B0B0"></div>
<div class="a" style="left:761px;top:154px;width:269px;height:69px;background:#EEEEEE;border:2px solid #6E7680"></div>
<svg class="a" style="left:1011px;top:157px" width="16" height="16"><use href="#mag"/></svg>

<div class="t" style="left:826px;top:248px">Document Folder:</div>
<div class="a" style="left:826px;top:264px;width:216px;height:49px;background:#EEEEEE;border:2px solid #6E7680"></div>
<div class="a" style="left:1014px;top:240px;width:49px;height:23px;border:1px solid #C8C8C8;background:#fff"></div>
<div class="a" style="left:1024px;top:242px;width:30px;height:20px;border:1px solid #555;border-radius:2px;background:#fff"></div>
<div class="t b" style="left:1025px;top:245px;font-size:11px;color:#111;transform:scaleX(0.88);transform-origin:0 0">Reset</div>
<div class="tab tabA" style="left:10px;top:334px;width:67px"><i></i><span>Item(s)</span></div>
<div class="tab" style="left:76px;top:334px;width:59px"><i></i><span>Labor</span></div>
<div class="a" style="left:9px;top:356px;width:1171px;height:303px;background:#C8DBF1;border:1px solid #6C8FD0;border-right-color:#6E7F96;border-bottom-color:#7C90AC"></div>
<div class="a" style="left:12px;top:360px;width:1164px;height:295px;background:#fff;border:1px solid #A6A6A6;border-right-color:#B8B8B8;border-bottom-color:#C8C8C8"></div>
<div class="a" style="left:13px;top:393px;width:1162px;height:1px;background:#B0B0B0"></div>
<div class="t" style="left:45px;top:369px">Search :</div>
<div class="t" style="left:120px;top:369px">Asset</div>
<div class="a" style="left:162px;top:365px;width:120px;height:24px;border:1px solid #111;box-shadow:inset 0 0 0 0.5px #111;background:#fff"></div>
<div class="t" style="left:362px;top:369px">Product</div>
<div class="a" style="left:412px;top:365px;width:195px;height:24px;border:1px solid #111;box-shadow:inset 0 0 0 0.5px #111;background:#fff"></div>
<div class="t" style="left:625px;top:368px">Qty</div>
<div class="a" style="left:647px;top:365px;width:40px;height:24px;border:1px solid #111;box-shadow:inset 0 0 0 0.5px #111;background:#fff"></div>
<div class="t" style="left:648px;top:371px">1</div>
<div class="cb" style="left:707px;top:371px"></div>
<div class="t" style="left:724px;top:371px">Update existing lines</div>
<div class="a" style="left:11px;top:395px;width:1165px;height:258px;border:1px solid #A8A8A8;border-bottom:none;border-right-color:#A8B8C8;background:#fff"></div>
<div class="a" style="left:12px;top:397px;width:1162px;height:1px;background:#7890A8"></div>
<div class="a" style="left:13px;top:398px;width:1160px;height:240px;overflow:hidden">
<div class="hd" style="left:1px;top:0;width:14px">T</div>
<div class="hd" style="left:15px;top:0;width:15px">C</div>
<div class="hd" style="left:30px;top:0;width:15px">X</div>
<div class="hd" style="left:45px;top:0;width:15px">M</div>
<div class="hd" style="left:60px;top:0;width:15px">S</div>
<div class="hd" style="left:75px;top:0;width:20px">I.C</div>
<div class="hd" style="left:95px;top:0;width:20px">I....</div>
<div class="hd" style="left:115px;top:0;width:19px">I.I</div>
<div class="hd" style="left:134px;top:0;width:142px">Modifications</div>
<div class="hd" style="left:276px;top:0;width:74px">Status</div>
<div class="hd" style="left:350px;top:0;width:20px">L</div>
<div class="hd" style="left:370px;top:0;width:45px">Action</div>
<div class="hd" style="left:415px;top:0;width:100px">Product ID</div>
<div class="hd" style="left:515px;top:0;width:119px">Description</div>
<div class="hd" style="left:634px;top:0;width:55px">Duration</div>
<div class="hd" style="left:689px;top:0;width:30px">Qty</div>
<div class="hd" style="left:719px;top:0;width:100px">Shipping Site</div>
<div class="hd" style="left:819px;top:0;width:100px">Returning Site</div>
<div class="hd" style="left:919px;top:0;width:40px">Unit</div>
<div class="hd" style="left:959px;top:0;width:90px">Day/Each Price</div>
<div class="hd" style="left:1049px;top:0;width:70px">Week Price</div>
<div class="hd" style="left:1119px;top:0;width:69px">Month Price</div>
<div class="a" style="left:0;top:0;width:1px;height:19px;background:#8C3A1E"></div>
<div class="a" style="left:0;top:19px;width:1200px;height:20px;background:#FA9B4C;border-bottom:1px solid #B86E38"></div>
<div class="a" style="left:14px;top:19px;width:1px;height:20px;background:#B86E38"></div>
<div class="a" style="left:29px;top:19px;width:1px;height:20px;background:#B86E38"></div>
<div class="a" style="left:44px;top:19px;width:1px;height:20px;background:#B86E38"></div>
<div class="a" style="left:59px;top:19px;width:1px;height:20px;background:#B86E38"></div>
<div class="a" style="left:74px;top:19px;width:1px;height:20px;background:#B86E38"></div>
<div class="a" style="left:94px;top:19px;width:1px;height:20px;background:#B86E38"></div>
<div class="a" style="left:114px;top:19px;width:1px;height:20px;background:#B86E38"></div>
<div class="a" style="left:133px;top:19px;width:1px;height:20px;background:#B86E38"></div>
<div class="a" style="left:275px;top:19px;width:1px;height:20px;background:#B86E38"></div>
<div class="a" style="left:349px;top:19px;width:1px;height:20px;background:#B86E38"></div>
<div class="a" style="left:369px;top:19px;width:1px;height:20px;background:#B86E38"></div>
<div class="a" style="left:414px;top:19px;width:1px;height:20px;background:#B86E38"></div>
<div class="a" style="left:514px;top:19px;width:1px;height:20px;background:#B86E38"></div>
<div class="a" style="left:633px;top:19px;width:1px;height:20px;background:#B86E38"></div>
<div class="a" style="left:688px;top:19px;width:1px;height:20px;background:#B86E38"></div>
<div class="a" style="left:718px;top:19px;width:1px;height:20px;background:#B86E38"></div>
<div class="a" style="left:818px;top:19px;width:1px;height:20px;background:#B86E38"></div>
<div class="a" style="left:918px;top:19px;width:1px;height:20px;background:#B86E38"></div>
<div class="a" style="left:958px;top:19px;width:1px;height:20px;background:#B86E38"></div>
<div class="a" style="left:1048px;top:19px;width:1px;height:20px;background:#B86E38"></div>
<div class="a" style="left:1118px;top:19px;width:1px;height:20px;background:#B86E38"></div>
<div class="a" style="left:1187px;top:19px;width:1px;height:20px;background:#B86E38"></div>
<div class="cb" style="left:1px;top:23px"></div>
<div class="cb" style="left:16px;top:23px"></div>
<div class="cb" style="left:31px;top:23px"></div>
<div class="cb" style="left:46px;top:23px"></div>
<div class="cb" style="left:61px;top:23px"></div>
<div class="cb" style="left:78px;top:23px"></div>
<div class="cb" style="left:98px;top:23px"></div>
<div class="cb" style="left:118px;top:23px"></div>
<div class="cb" style="left:353px;top:23px"></div>
<svg class="a" style="left:1px;top:23px" width="13" height="13"><path d="M3 5H4.9V9.9H3Z" fill="#1A1A1A"/><path d="M4.3 9.2L10 3.3" stroke="#1A1A1A" stroke-width="1.3"/></svg>
<div class="t" style="left:136px;top:23px;color:#111;">Deleted In Ops Order</div>
<div class="t" style="left:276px;top:23px;color:#111;">Deleted</div>
<div class="t" style="left:371px;top:23px;color:#111;">Rent</div>
<div class="t" style="left:416px;top:23px;color:#111;">LGQ6</div>
<div class="t" style="left:523px;top:25px;color:#111;font-size:10px;line-height:12px">LGQ6</div>
<div class="t" style="left:635px;top:23px;color:#111;">0d</div>
<div class="t" style="left:618px;width:100px;text-align:right;top:23px;color:#111">4</div>
<div class="t" style="left:719px;top:23px;color:#111;">BUDAPEST</div>
<div class="t" style="left:820px;top:23px;color:#111;">PARIS</div>
<div class="t" style="left:919px;top:23px;color:#111;">Day</div>
<div class="t" style="left:948px;width:100px;text-align:right;top:23px;color:#111">0.00</div>
<div class="t" style="left:1018px;width:100px;text-align:right;top:23px;color:#111">0.00</div>
<div class="a" style="left:0;top:39px;width:1200px;height:19px;background:#fff;border-bottom:1px solid #B86E38"></div>
<div class="a" style="left:14px;top:39px;width:1px;height:19px;background:#B86E38"></div>
<div class="a" style="left:29px;top:39px;width:1px;height:19px;background:#B86E38"></div>
<div class="a" style="left:44px;top:39px;width:1px;height:19px;background:#B86E38"></div>
<div class="a" style="left:59px;top:39px;width:1px;height:19px;background:#B86E38"></div>
<div class="a" style="left:74px;top:39px;width:1px;height:19px;background:#B86E38"></div>
<div class="a" style="left:94px;top:39px;width:1px;height:19px;background:#B86E38"></div>
<div class="a" style="left:114px;top:39px;width:1px;height:19px;background:#B86E38"></div>
<div class="a" style="left:133px;top:39px;width:1px;height:19px;background:#B86E38"></div>
<div class="a" style="left:275px;top:39px;width:1px;height:19px;background:#B86E38"></div>
<div class="a" style="left:349px;top:39px;width:1px;height:19px;background:#B86E38"></div>
<div class="a" style="left:369px;top:39px;width:1px;height:19px;background:#B86E38"></div>
<div class="a" style="left:414px;top:39px;width:1px;height:19px;background:#B86E38"></div>
<div class="a" style="left:514px;top:39px;width:1px;height:19px;background:#B86E38"></div>
<div class="a" style="left:633px;top:39px;width:1px;height:19px;background:#B86E38"></div>
<div class="a" style="left:688px;top:39px;width:1px;height:19px;background:#B86E38"></div>
<div class="a" style="left:718px;top:39px;width:1px;height:19px;background:#B86E38"></div>
<div class="a" style="left:818px;top:39px;width:1px;height:19px;background:#B86E38"></div>
<div class="a" style="left:918px;top:39px;width:1px;height:19px;background:#B86E38"></div>
<div class="a" style="left:958px;top:39px;width:1px;height:19px;background:#B86E38"></div>
<div class="a" style="left:1048px;top:39px;width:1px;height:19px;background:#B86E38"></div>
<div class="a" style="left:1118px;top:39px;width:1px;height:19px;background:#B86E38"></div>
<div class="a" style="left:1187px;top:39px;width:1px;height:19px;background:#B86E38"></div>
<div class="cb" style="left:1px;top:42px"></div>
<div class="cb" style="left:16px;top:42px"></div>
<div class="cb" style="left:31px;top:42px"></div>
<div class="cb" style="left:46px;top:42px"></div>
<div class="cb" style="left:61px;top:42px"></div>
<div class="cb" style="left:78px;top:42px"></div>
<div class="cb" style="left:98px;top:42px"></div>
<div class="cb" style="left:118px;top:42px"></div>
<div class="cb" style="left:353px;top:42px"></div>
<svg class="a" style="left:1px;top:42px" width="13" height="13"><path d="M3 5H4.9V9.9H3Z" fill="#1A1A1A"/><path d="M4.3 9.2L10 3.3" stroke="#1A1A1A" stroke-width="1.3"/></svg>
<div class="t" style="left:276px;top:42px;color:#111;">Reserved</div>
<div class="t" style="left:371px;top:42px;color:#111;">Rent</div>
<div class="t" style="left:416px;top:42px;color:#111;">LGQ6</div>
<div class="t" style="left:523px;top:42px;color:#111;">LGQ6</div>
<div class="t" style="left:635px;top:42px;color:#111;">0d</div>
<div class="t" style="left:618px;width:100px;text-align:right;top:42px;color:#111">5</div>
<div class="t" style="left:719px;top:42px;color:#111;">BERLIN</div>
<div class="t" style="left:820px;top:42px;color:#111;">PARIS</div>
<div class="t" style="left:919px;top:42px;color:#111;">Day</div>
<div class="t" style="left:948px;width:100px;text-align:right;top:42px;color:#111">0.00</div>
<div class="t" style="left:1018px;width:100px;text-align:right;top:42px;color:#111">0.00</div>
<div class="a" style="left:0;top:58px;width:1200px;height:19px;background:#fff;border-bottom:1px solid #B86E38"></div>
<div class="a" style="left:14px;top:58px;width:1px;height:19px;background:#B86E38"></div>
<div class="a" style="left:29px;top:58px;width:1px;height:19px;background:#B86E38"></div>
<div class="a" style="left:44px;top:58px;width:1px;height:19px;background:#B86E38"></div>
<div class="a" style="left:59px;top:58px;width:1px;height:19px;background:#B86E38"></div>
<div class="a" style="left:74px;top:58px;width:1px;height:19px;background:#B86E38"></div>
<div class="a" style="left:94px;top:58px;width:1px;height:19px;background:#B86E38"></div>
<div class="a" style="left:114px;top:58px;width:1px;height:19px;background:#B86E38"></div>
<div class="a" style="left:133px;top:58px;width:1px;height:19px;background:#B86E38"></div>
<div class="a" style="left:275px;top:58px;width:1px;height:19px;background:#B86E38"></div>
<div class="a" style="left:349px;top:58px;width:1px;height:19px;background:#B86E38"></div>
<div class="a" style="left:369px;top:58px;width:1px;height:19px;background:#B86E38"></div>
<div class="a" style="left:414px;top:58px;width:1px;height:19px;background:#B86E38"></div>
<div class="a" style="left:514px;top:58px;width:1px;height:19px;background:#B86E38"></div>
<div class="a" style="left:633px;top:58px;width:1px;height:19px;background:#B86E38"></div>
<div class="a" style="left:688px;top:58px;width:1px;height:19px;background:#B86E38"></div>
<div class="a" style="left:718px;top:58px;width:1px;height:19px;background:#B86E38"></div>
<div class="a" style="left:818px;top:58px;width:1px;height:19px;background:#B86E38"></div>
<div class="a" style="left:918px;top:58px;width:1px;height:19px;background:#B86E38"></div>
<div class="a" style="left:958px;top:58px;width:1px;height:19px;background:#B86E38"></div>
<div class="a" style="left:1048px;top:58px;width:1px;height:19px;background:#B86E38"></div>
<div class="a" style="left:1118px;top:58px;width:1px;height:19px;background:#B86E38"></div>
<div class="a" style="left:1187px;top:58px;width:1px;height:19px;background:#B86E38"></div>
<div class="cb" style="left:1px;top:61px"></div>
<div class="cb" style="left:16px;top:61px"></div>
<div class="cb" style="left:31px;top:61px"></div>
<div class="cb" style="left:46px;top:61px"></div>
<div class="cb" style="left:61px;top:61px"></div>
<div class="cb" style="left:78px;top:61px"></div>
<div class="cb" style="left:98px;top:61px"></div>
<div class="cb" style="left:118px;top:61px"></div>
<div class="cb" style="left:353px;top:61px"></div>
<svg class="a" style="left:1px;top:61px" width="13" height="13"><path d="M3 5H4.9V9.9H3Z" fill="#1A1A1A"/><path d="M4.3 9.2L10 3.3" stroke="#1A1A1A" stroke-width="1.3"/></svg>
<div class="t" style="left:276px;top:61px;color:#111;">Reserved</div>
<div class="t" style="left:371px;top:61px;color:#111;">Rent</div>
<div class="t" style="left:416px;top:61px;color:#111;">LGQ6</div>
<div class="t" style="left:523px;top:61px;color:#111;">LGQ6</div>
<div class="t" style="left:635px;top:61px;color:#111;">0d</div>
<div class="t" style="left:618px;width:100px;text-align:right;top:61px;color:#111">3</div>
<div class="t" style="left:719px;top:61px;color:#111;">COLOGNE</div>
<div class="t" style="left:820px;top:61px;color:#111;">PARIS</div>
<div class="t" style="left:919px;top:61px;color:#111;">Day</div>
<div class="t" style="left:948px;width:100px;text-align:right;top:61px;color:#111">0.00</div>
<div class="t" style="left:1018px;width:100px;text-align:right;top:61px;color:#111">0.00</div>
</div>
<div class="a" style="left:146px;top:398px;width:142px;height:40px;border:2px solid #C00000"></div>
<div class="a" style="left:1173px;top:398px;width:1px;height:236px;background:#D8E4F0"></div>
<div class="a" style="left:13px;top:635px;width:1160px;height:16px;background:#EEEEEE;border-top:1px solid #7A8EA6;border-bottom:1px solid #7A8EA6"></div>
<div class="a" style="left:14px;top:635px;width:15px;height:16px;background:#EEEEEE;border:1px solid #B8C4D0;border-top:none;border-bottom:none"></div>
<svg class="a" style="left:18px;top:638px" width="6" height="10"><path d="M5 0V10L0 5Z" fill="#222"/></svg>
<div class="a" style="left:28px;top:635px;width:543px;height:16px;background:linear-gradient(180deg,#F2CAA8 0%,#E49E6E 100%);border:1px solid #FFC000;box-shadow:inset 1px 1px 0 #E28A52"></div>
<div class="a" style="left:297px;top:639px;width:5px;height:8px;border-left:1px solid #B88060;border-right:1px solid #B88060"></div>
<div class="a" style="left:299px;top:639px;width:1px;height:8px;background:#B88060"></div>
<div class="a" style="left:1156px;top:635px;width:17px;height:16px;background:#EEEEEE;border:1px solid #8AA0B8;box-shadow:inset 1px 1px 0 #fff"></div>
<svg class="a" style="left:1162px;top:638px" width="6" height="10"><path d="M0 0V10L5 5Z" fill="#222"/></svg>
<div class="a" style="left:12px;top:652px;width:1162px;height:1px;background:#A8B8C8"></div>
<div class="t b" style="left:70px;top:666px;font-size:14px;line-height:16px">Items</div>
<div class="fld" style="left:120px;top:661px;width:100px;height:24px"></div>
<div class="t b" style="left:235px;top:666px;font-size:14px;line-height:16px">Labor</div>
<div class="fld" style="left:287px;top:661px;width:100px;height:24px"></div>
<div class="t b" style="left:446px;top:666px;font-size:14px;line-height:16px">Sub Total</div>
<div class="fld" style="left:525px;top:661px;width:100px;height:24px"></div>
<div class="t b" style="left:636px;top:666px;font-size:14px;line-height:16px">Tax</div>
<div class="fld" style="left:670px;top:661px;width:100px;height:24px"></div>
<div class="a" style="left:813px;top:661px;width:89px;height:23px;border:1px solid #BDBDBD;background:#fff"></div>
<div class="t b" style="left:813px;top:666px;width:89px;text-align:center;font-size:14px;line-height:16px">Total</div>
<div class="fld b" style="left:906px;top:661px;width:100px;height:24px;font-size:14px;padding-top:4px;color:#111">0.00</div>
<div class="a" style="left:8px;top:695px;width:1171px;height:25px;border:1px solid #D4DAE0;box-shadow:inset 1px 1px 0 #7E7E7E,inset -1px -1px 0 #C8C8C8;background:#fff"></div>
<div class="a" style="left:340px;top:51px;width:147px;height:80px;background:#EEEEEE;border:1px solid #7E9CCF;box-shadow:inset 1px 1px 0 #fff"></div>
<div class="t" style="left:347px;top:56px;color:#2A2A3A">View Main Order</div>
<div class="t" style="left:347px;top:75px;color:#2A2A3A">Change Shipping Site</div>
<div class="t" style="left:347px;top:94px;color:#2A2A3A">Change Returning Site</div>
<div class="a" style="left:340px;top:110px;width:142px;height:21px;background:#FBB06C;border:2px solid #C00000;box-shadow:inset 0 -1px 0 #fff"></div>
<div class="t" style="left:347px;top:113px;color:#111">Ops Modifications</div>
<svg class="a" style="left:476px;top:115px" width="5" height="9"><path d="M0 0L4.5 4.5L0 9Z" fill="#333"/></svg>
<div class="a" style="left:482px;top:108px;width:163px;height:42px;background:#EEEEEE;border:1px solid #7E9CCF;box-shadow:inset 1px 1px 0 #fff"></div>
<div class="a" style="left:480px;top:108px;width:165px;height:23px;background:#FBB06C;border:2px solid #C00000;border-width:2.5px 2px 2px 2.5px;box-shadow:inset 0 -1px 0 #fff,inset 0 1px 0 #8AA6D8"></div>
<div class="t" style="left:489px;top:113px;color:#111">Refresh</div>
<div class="t" style="left:607px;top:113px;color:#333;font-size:10px">Alt-R</div>
<div class="t" style="left:489px;top:132px;color:#2A2A3A">Synch To Main Order</div>
</body></html>
